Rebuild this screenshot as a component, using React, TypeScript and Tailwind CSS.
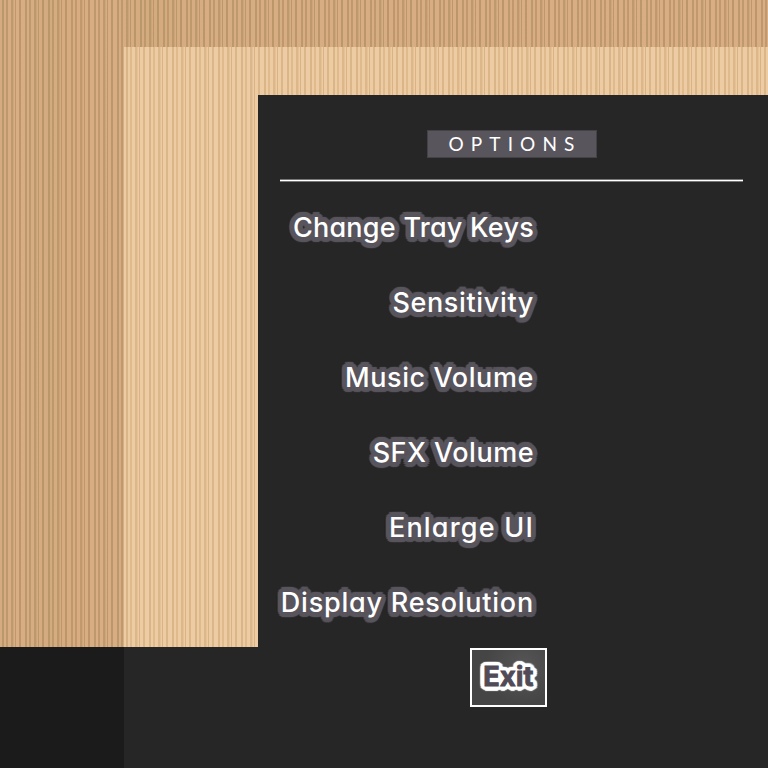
const outline =
  "[text-shadow:5px_0_1px_#59555d,-5px_0_1px_#59555d,0_5px_1px_#59555d,0_-5px_1px_#59555d,3.5px_3.5px_1px_#59555d,-3.5px_3.5px_1px_#59555d,3.5px_-3.5px_1px_#59555d,-3.5px_-3.5px_1px_#59555d,4.6px_1.9px_1px_#59555d,-4.6px_1.9px_1px_#59555d,4.6px_-1.9px_1px_#59555d,-4.6px_-1.9px_1px_#59555d,1.9px_4.6px_1px_#59555d,-1.9px_4.6px_1px_#59555d,1.9px_-4.6px_1px_#59555d,-1.9px_-4.6px_1px_#59555d,2px_0_#59555d,-2px_0_#59555d,0_2px_#59555d,0_-2px_#59555d]";

const exitOutline =
  "[text-shadow:4.5px_0_1px_#fff,-4.5px_0_1px_#fff,0_4.5px_1px_#fff,0_-4.5px_1px_#fff,3.2px_3.2px_1px_#fff,-3.2px_3.2px_1px_#fff,3.2px_-3.2px_1px_#fff,-3.2px_-3.2px_1px_#fff,4.2px_1.7px_1px_#fff,-4.2px_1.7px_1px_#fff,4.2px_-1.7px_1px_#fff,-4.2px_-1.7px_1px_#fff,1.7px_4.2px_1px_#fff,-1.7px_4.2px_1px_#fff,1.7px_-4.2px_1px_#fff,-1.7px_-4.2px_1px_#fff,2px_0_#fff,-2px_0_#fff,0_2px_#fff,0_-2px_#fff]";

const darkWood =
  "bg-[linear-gradient(90deg,#9a854010_0,#9a854000_15px,#9a854016_50px,#d8905010_80px,#9a854000_100px,#9a854016_150px,#9a854008_200px,#9a854000_100%),repeating-linear-gradient(90deg,#d9ae85_0_2px,#bd996d_2px_4px,#d9ae85_4px_6px,#c09a6e_6px_8px,#d9ae85_8px_11px,#be9a6e_11px_13px,#cfa67c_13px_14px,#d9ae85_14px_15px,#bd986d_15px_16px,#d9ae85_16px_19px,#bc976b_19px_21px,#d9ae85_21px_23px)]";
const lightWood =
  "bg-[repeating-linear-gradient(90deg,#edcba3_0_2px,#dab587_2px_4px,#edcba3_4px_6px,#dfba8d_6px_8px,#edcba3_8px_11px,#dcb78a_11px_13px,#e5c196_13px_14px,#edcba3_14px_15px,#d9b386_15px_16px,#edcba3_16px_19px,#dbb689_19px_21px,#edcba3_21px_23px)]";

const rows = [
  { label: "Change Tray Keys", spacing: "tracking-[0.25px]" },
  { label: "Sensitivity", spacing: "tracking-[0.65px]" },
  { label: "Music Volume", spacing: "tracking-[0.6px]" },
  { label: "SFX Volume", spacing: "tracking-[0.5px]" },
  { label: "Enlarge UI", spacing: "tracking-[1.2px]" },
  { label: "Display Resolution", spacing: "tracking-[0.78px]" },
];

export default function App() {
  return (
    <div className="grid h-[768px] w-[768px] grid-cols-[124px_134px_510px] grid-rows-[47px_48px_552px_121px] overflow-hidden bg-[#262626] font-['Inter',sans-serif]">
      <div className={`col-span-3 col-start-1 row-start-1 ${darkWood}`} />
      <div className={`col-start-1 row-span-2 row-start-2 ${darkWood}`} />
      <div className={`col-span-2 col-start-2 row-start-2 ${lightWood}`} />
      <div className={`col-start-2 row-start-3 ${lightWood}`} />
      <div className="col-start-1 row-start-4 bg-[#1b1b1b]" />
      <main className="col-start-3 row-span-2 row-start-3 flex flex-col bg-[#262626] pt-[35px]">
        <h1 className="ml-[169px] flex h-[28px] w-[170px] items-center justify-center border border-[#444147] bg-[#59555d] pl-[6px] font-['Lato',sans-serif] text-[19px] tracking-[7.1px] text-white">
          OPTIONS
        </h1>
        <div className="mt-[21px] ml-[22px] h-[3px] w-[463px] border-y border-[#777] bg-white" />
        <ul className="mt-[8px] flex w-[276px] flex-col">
          {rows.map((row) => (
            <li key={row.label} className="flex h-[75px] items-center justify-end">
              <span className={`text-[27px] leading-none font-medium whitespace-nowrap text-white [font-feature-settings:'cv11'] ${row.spacing} ${outline}`}>
                {row.label}
              </span>
            </li>
          ))}
        </ul>
        <button className="mt-[8px] ml-[212px] flex h-[59px] w-[77px] items-center justify-center border-2 border-white bg-[#4b4b4b] bg-[radial-gradient(circle_at_70%_30%,#565656,#454545_60%)] pb-[3px]">
          <span className={`text-[27px] leading-none font-bold tracking-[0.3px] text-[#504b56] [-webkit-text-stroke:1px_#504b56] ${exitOutline}`}>Exit</span>
        </button>
      </main>
    </div>
  );
}
